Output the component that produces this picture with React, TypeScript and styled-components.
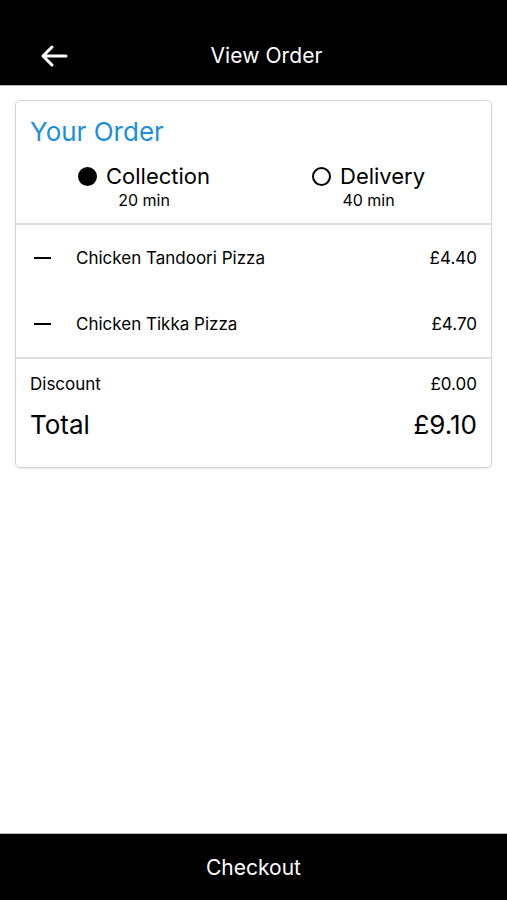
import React from 'react';
import styled, { createGlobalStyle } from 'styled-components';

const GlobalStyle = createGlobalStyle`
    html, body {
        margin: 0;
        padding: 0;
        background: #fff;
    }
    body {
        font-family: Inter, "Noto Sans", "Liberation Sans", sans-serif;
        color: #000;
    }
    * {
        box-sizing: border-box;
    }
`;

const Page = styled.div`
    width: 507px;
    height: 900px;
    display: flex;
    flex-direction: column;
    background: #fff;
`;

const Header = styled.div`
    height: 86px;
    background: #000;
    color: #fff;
    display: grid;
    grid-template-columns: 106px 1fr 80px;
    align-items: center;
    padding-top: 26px;
    border-bottom: 1px solid #bbb;
`;

const BackButton = styled.button`
    background: none;
    border: none;
    padding: 0 0 0 40px;
    margin: 0;
    color: #fff;
    display: flex;
    align-items: center;
    cursor: pointer;
`;

const HeaderTitle = styled.div`
    text-align: center;
    font-size: 21px;
    letter-spacing: 0.1px;
`;

const Content = styled.div`
    flex: 1;
    padding: 14px 15px 0 15px;
`;

const Card = styled.div`
    border: 1px solid #d6d6d6;
    border-radius: 5px;
    box-shadow: 0 1px 2px rgba(0, 0, 0, 0.08);
    display: flex;
    flex-direction: column;
`;

const TopSection = styled.div`
    padding: 15px 14px 13px 14px;
    border-bottom: 2px solid #ddd;
`;

const Title = styled.div`
    color: #1a8fe0;
    font-size: 26px;
    line-height: 32px;
`;

const Options = styled.div`
    display: grid;
    grid-template-columns: 234px 1fr;
    margin-top: 15px;
    padding-left: 48px;
`;

const Option = styled.div`
    display: flex;
    flex-direction: column;
    align-items: center;
    justify-self: start;
`;

const OptionLabel = styled.div`
    display: flex;
    align-items: center;
    gap: 9px;
    font-size: 22px;
    line-height: 26px;
`;

const Radio = styled.span<{ checked: boolean }>`
    width: 19px;
    height: 19px;
    border-radius: 50%;
    border: 2px solid #000;
    background: ${props => (props.checked ? '#000' : 'transparent')};
`;

const OptionTime = styled.div`
    font-size: 16px;
    line-height: 20px;
    margin-top: 1px;
`;

const Items = styled.div`
    padding: 0 14px;
    border-bottom: 2px solid #ddd;
`;

const ItemRow = styled.div`
    height: 66px;
    display: flex;
    align-items: center;
    font-size: 17px;
`;

const Minus = styled.span`
    width: 17px;
    height: 2px;
    background: #000;
    margin: 0 25px 0 4px;
`;

const ItemName = styled.div`
    flex: 1;
`;

const Price = styled.div`
    font-size: 17px;
`;

const Totals = styled.div`
    padding: 12px 14px 24px 14px;
`;

const TotalRow = styled.div<{ big?: boolean }>`
    display: flex;
    justify-content: space-between;
    align-items: center;
    font-size: ${props => (props.big ? '26px' : '17px')};
    line-height: ${props => (props.big ? '36px' : '26px')};
    margin-top: ${props => (props.big ? '10px' : '0')};
`;

const Footer = styled.button`
    height: 67px;
    background: #000;
    color: #fff;
    border: none;
    border-top: 1px solid #bbb;
    font-family: inherit;
    font-size: 21px;
    width: 100%;
    cursor: pointer;
`;

const items = [
    { name: 'Chicken Tandoori Pizza', price: '£4.40' },
    { name: 'Chicken Tikka Pizza', price: '£4.70' },
];

export default function App() {
    return (
        <Page>
            <GlobalStyle />
            <Header>
                <BackButton aria-label="Back">
                    <svg width="28" height="24" viewBox="0 0 28 24" fill="none">
                        <path
                            d="M26 12H3M12 3L3 12L12 21"
                            stroke="#fff"
                            strokeWidth="3"
                            strokeLinecap="round"
                            strokeLinejoin="round"
                        />
                    </svg>
                </BackButton>
                <HeaderTitle>View Order</HeaderTitle>
                <div />
            </Header>
            <Content>
                <Card>
                    <TopSection>
                        <Title>Your Order</Title>
                        <Options>
                            <Option>
                                <OptionLabel>
                                    <Radio checked />
                                    Collection
                                </OptionLabel>
                                <OptionTime>20 min</OptionTime>
                            </Option>
                            <Option>
                                <OptionLabel>
                                    <Radio checked={false} />
                                    Delivery
                                </OptionLabel>
                                <OptionTime>40 min</OptionTime>
                            </Option>
                        </Options>
                    </TopSection>
                    <Items>
                        {items.map(item => (
                            <ItemRow key={item.name}>
                                <Minus />
                                <ItemName>{item.name}</ItemName>
                                <Price>{item.price}</Price>
                            </ItemRow>
                        ))}
                    </Items>
                    <Totals>
                        <TotalRow>
                            <span>Discount</span>
                            <span>£0.00</span>
                        </TotalRow>
                        <TotalRow big>
                            <span>Total</span>
                            <span>£9.10</span>
                        </TotalRow>
                    </Totals>
                </Card>
            </Content>
            <Footer>Checkout</Footer>
        </Page>
    );
}
